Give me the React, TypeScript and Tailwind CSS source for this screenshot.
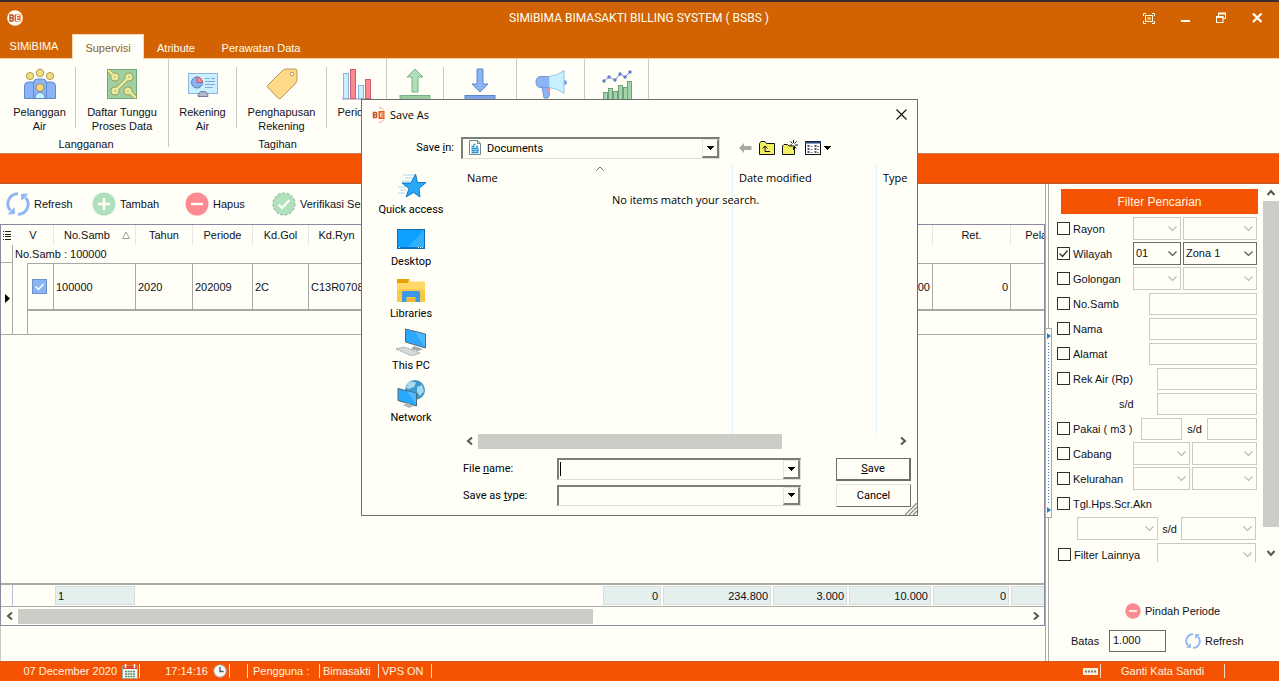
import { useState, type ReactNode } from "react";

/* ---------- Ribbon icons ---------- */

const PeopleIcon = () => (
  <svg width="34" height="32" viewBox="0 0 34 32" aria-hidden="true">
    <g stroke="#b0a050" fill="#f0de80">
      <circle cx="7" cy="8" r="3.6" />
      <circle cx="17" cy="5" r="3.8" />
      <circle cx="27" cy="8" r="3.6" />
    </g>
    <g fill="#8ab4f5" stroke="#5f8ad0">
      <path d="M1.500 30.500V18q0-4 4-4H9q3 0 3 3v13.500z" />
      <path d="M32.500 30.500V18q0-4-4-4H25q-3 0-3 3v13.500z" />
      <path d="M10.500 30.500V15q0-4 4-4h5q4 0 4 4v15.500z" />
    </g>
    <path d="M12 30.500q0-6 5-6t5 6z" fill="#c8f0ff" stroke="#5f8ad0" />
    <circle cx="17" cy="19.500" r="3.800" fill="#ffd880" stroke="#a89050" />
  </svg>
);

const CircuitIcon = () => (
  <svg width="32" height="32" viewBox="0 0 32 32" aria-hidden="true">
    <rect x="1.500" y="1.500" width="29" height="29" fill="#a0cfa4" stroke="#6ea878" />
    <g stroke="#8f9c58" strokeWidth="4" strokeLinecap="round">
      <path d="M3 3l5 5M10 22L22 10M24 24l5 5" />
    </g>
    <g fill="none" stroke="#8f9c58" strokeWidth="4.500">
      <circle cx="9" cy="9" r="2.300" />
      <circle cx="23" cy="9" r="2.300" />
      <circle cx="9" cy="23" r="2.300" />
      <circle cx="22" cy="23" r="2.300" />
    </g>
    <g stroke="#ecea9a" strokeWidth="2.500" strokeLinecap="round">
      <path d="M3 3l5 5M10 22L22 10M24 24l5 5" />
    </g>
    <g fill="#a0cfa4" stroke="#ecea9a" strokeWidth="2.600">
      <circle cx="9" cy="9" r="2.300" />
      <circle cx="23" cy="9" r="2.300" />
      <circle cx="9" cy="23" r="2.300" />
      <circle cx="22" cy="23" r="2.300" />
    </g>
  </svg>
);

const AccountIcon = () => (
  <svg width="32" height="32" viewBox="0 0 32 32" aria-hidden="true">
    <rect x="1.500" y="5.500" width="29" height="20" fill="#c8f0ff" stroke="#8fb4e0" />
    <circle cx="10" cy="14.500" r="5.500" fill="#8ab4f5" stroke="#5f7fb8" />
    <path d="M10 9v5.500h5.500A5.500 5.500 0 0 0 10 9z" fill="#f58a90" stroke="#b86070" />
    <path d="M18 10.500h4M18 13.500h10M18 16.500h10M18 19.500h8M24 10.500h4" stroke="#7fa8d8" />
    <path d="M11 28.500q0-5 5-5t5 5z" fill="#b0b8d0" stroke="#70789a" />
  </svg>
);

const TagIcon = () => (
  <svg width="32" height="32" viewBox="0 0 32 32" aria-hidden="true">
    <path d="M1.500 17.500L16 3q2-2 5-2h8q2 0 2 2v8q0 3-2 5L15 30q-1.500 1.500-3 0L1.500 19q-.8-.8 0-1.500z" fill="#ffd98a" stroke="#b89858" />
    <circle cx="26" cy="6" r="1.800" fill="#fffff8" stroke="#b89858" />
  </svg>
);

const BarsIcon = () => (
  <svg width="32" height="32" viewBox="0 0 32 32" aria-hidden="true">
    <path d="M1 31h30" stroke="#a08cb0" />
    <rect x="2.500" y="5.500" width="5" height="25" fill="#c8f0ff" stroke="#90b0d8" />
    <rect x="9.500" y="1.500" width="5" height="29" fill="#fa8a90" stroke="#c86070" />
    <rect x="17.500" y="17.500" width="5" height="13" fill="#c8f0ff" stroke="#90b0d8" />
    <rect x="24.500" y="11.500" width="5" height="19" fill="#fa8a90" stroke="#c86070" />
  </svg>
);

const UploadIcon = () => (
  <svg width="32" height="32" viewBox="0 0 32 32" aria-hidden="true">
    <path d="M16 1l8 8h-5v15h-6V9H8z" fill="#b0e0b8" stroke="#78b088" />
    <rect x="1" y="27.500" width="30" height="4" fill="#98cca0" stroke="#78b088" />
  </svg>
);

const DownloadIcon = () => (
  <svg width="32" height="32" viewBox="0 0 32 32" aria-hidden="true">
    <path d="M16 24l8-8h-5V1h-6v15H8z" fill="#8ab4f5" stroke="#5f84c8" />
    <rect x="1" y="27.500" width="30" height="4" fill="#7ca4e8" stroke="#5f84c8" />
  </svg>
);

const MegaphoneIcon = () => (
  <svg width="32" height="32" viewBox="0 0 32 32" aria-hidden="true">
    <path d="M29 12q3 0 3 2.500T29 17z" fill="#7fa0e8" />
    <path d="M7 19l2 11h4l1.500-3-1-8z" fill="#8ab4f5" stroke="#7098d8" />
    <path d="M12 20h3v4h-2.500z" fill="#f58a90" />
    <path d="M6 8.500h8v11H6q-5 0-5-5.500t5-5.500z" fill="#8ab4f5" stroke="#7098d8" />
    <path d="M14 8.500q9-1 15-6v23q-6-5-15-6z" fill="#c8f0ff" stroke="#98c4e8" />
  </svg>
);

const StatsIcon = () => (
  <svg width="32" height="32" viewBox="0 0 32 32" aria-hidden="true">
    <path d="M3 13l5-4 6 3 5-6 5 3 5-5" fill="none" stroke="#7890c8" />
    <g fill="#5a7cc8">
      <circle cx="3" cy="13" r="1.700" />
      <circle cx="8" cy="9" r="1.700" />
      <circle cx="14" cy="12" r="1.700" />
      <circle cx="19" cy="6" r="1.700" />
      <circle cx="24" cy="9" r="1.700" />
      <circle cx="29" cy="4" r="1.700" />
    </g>
    <g fill="#a4d4ac" stroke="#70a07c">
      <rect x="2.500" y="24.500" width="4" height="8" />
      <rect x="7.500" y="20.500" width="4" height="12" />
      <rect x="12.500" y="23.500" width="4" height="9" />
      <rect x="17.500" y="17.500" width="4" height="15" />
      <rect x="22.500" y="19.500" width="4" height="13" />
      <rect x="26.500" y="13.500" width="4" height="19" />
    </g>
  </svg>
);

/* ---------- Toolbar icons ---------- */

const RefreshIcon = ({ size = 24 }: { size?: number }) => (
  <svg width={size} height={size} viewBox="0 0 24 24" aria-hidden="true">
    <g fill="none" stroke="#90b8f4" strokeWidth="3">
      <path d="M12 1.800A10 10 0 0 0 4.500 18.500" />
      <path d="M12 22.200A10 10 0 0 0 19.500 5.500" />
    </g>
    <path d="M1.500 22.500l7.500-.5-.5-7z" fill="#90b8f4" />
    <path d="M22.500 1.500l-7.500 .5 .5 7z" fill="#90b8f4" />
  </svg>
);

const AddIcon = () => (
  <svg width="24" height="24" viewBox="0 0 24 24" aria-hidden="true">
    <circle cx="12" cy="12" r="11.500" fill="#b0e0bc" />
    <path d="M12 6v12M6 12h12" stroke="#fffff8" strokeWidth="2.400" />
  </svg>
);

const RemoveIcon = ({ size = 24 }: { size?: number }) => (
  <svg width={size} height={size} viewBox="0 0 24 24" aria-hidden="true">
    <circle cx="12" cy="12" r="11.500" fill="#fb8a92" />
    <path d="M6 12h12" stroke="#fffff8" strokeWidth="2.400" />
  </svg>
);

const VerifyIcon = () => (
  <svg width="24" height="24" viewBox="0 0 24 24" aria-hidden="true">
    <circle cx="12" cy="12" r="10.800" fill="#b0e0bc" />
    <circle cx="12" cy="12" r="11" fill="none" stroke="#7fb090" strokeDasharray="3 1.500" />
    <path d="M6.500 12.500l3.500 3.500 7.500-8" fill="none" stroke="#fffff8" strokeWidth="2.200" />
  </svg>
);

const LogoIcon = () => (
  <svg width="16" height="16" viewBox="0 0 16 16" aria-hidden="true">
    <circle cx="8" cy="8" r="7.800" fill="#fffff8" />
    <path d="M7.500 4.500h6v7h-6z" fill="#ee5a10" />
    <path d="M3 5h2.500q1.500 1.500 0 3 1.500 1.500 0 3H3zM3 8h2.500" fill="none" stroke="#a84820" strokeWidth="1.300" />
    <path d="M12.500 5.500h-3v5h3M9.500 8h3" fill="none" stroke="#fffff8" />
  </svg>
);

const DialogLogoIcon = () => (
  <svg width="14" height="16" viewBox="0 0 14 16" aria-hidden="true">
    <path d="M7 .5q3 0 5 3M7 15.500q3 0 5-3" fill="none" stroke="#f0a080" />
    <path d="M6.500 4h6v8h-6z" fill="#ee5a10" />
    <path d="M1.500 5.500H4q1.500 1.200 0 2.500 1.500 1.200 0 2.500H1.500zM1.500 8H4" fill="none" stroke="#c05020" strokeWidth="1.500" />
    <path d="M11.500 6h-3v4h3M8.500 8h3" fill="none" stroke="#ffd8c0" />
  </svg>
);

/* ---------- Small glyphs ---------- */

type Direction = "left" | "right" | "up" | "down";

const chevronPaths: Record<Direction, string> = {
  left: "M7 1.500L3 5l4 3.500",
  right: "M3 1.500L7 5 3 8.500",
  up: "M1.500 7L5 3l3.500 4",
  down: "M1.500 3L5 7l3.500-4",
};

const Chevron = ({ dir }: { dir: Direction }) => (
  <svg width="10" height="10" viewBox="0 0 10 10" aria-hidden="true">
    <path d={chevronPaths[dir]} fill="none" stroke="#555852" strokeWidth="2" />
  </svg>
);

const CaretDown = () => (
  <svg width="8" height="5" viewBox="0 0 8 5" aria-hidden="true" shapeRendering="crispEdges">
    <path d="M0 0h8L4 4z" fill="#000" />
  </svg>
);

/* ---------- Window frame ---------- */

const TitleBar = () => (
  <header className="shrink-0 border-t-2 border-[#3a2c30] bg-[#d26202] text-[#fffff0]">
    <div className="flex h-8 items-center pr-4 pl-[7px]">
      <div className="flex flex-1">
        <LogoIcon />
      </div>
      <h1 className="pl-2 font-['Roboto',sans-serif] text-[12px]">SIMiBIMA BIMASAKTI BILLING SYSTEM ( BSBS )</h1>
      <div className="flex flex-1 items-center justify-end gap-6">
        <button type="button" aria-label="Full screen">
          <svg width="12" height="11" viewBox="0 0 12 11" aria-hidden="true">
            <path d="M.5 3V.5H3M9 .5h2.500V3M11.500 8v2.500H9M3 10.500H.5V8" fill="none" stroke="#fffff0" />
            <rect x="2.500" y="2.500" width="7" height="6" fill="#d26202" stroke="#fffff0" />
            <rect x="4" y="4" width="4" height="3" fill="#f0b060" />
          </svg>
        </button>
        <button type="button" aria-label="Minimize">
          <svg width="12" height="12" viewBox="0 0 12 12" aria-hidden="true">
            <path d="M2 9h9" stroke="#fffff0" strokeWidth="2" />
          </svg>
        </button>
        <button type="button" aria-label="Restore">
          <svg width="12" height="12" viewBox="0 0 12 12" aria-hidden="true">
            <path d="M3.500 4V1.500h7v5H8" fill="none" stroke="#fffff0" />
            <path d="M3 1.500h8M1 5h7.500" stroke="#fffff0" strokeWidth="2" />
            <rect x="1.500" y="5" width="6.500" height="5.500" fill="none" stroke="#fffff0" />
          </svg>
        </button>
        <button type="button" aria-label="Close">
          <svg width="12" height="12" viewBox="0 0 12 12" aria-hidden="true">
            <path d="M2 1.500l8.500 8.500M10.500 1.500L2 10" stroke="#fffff0" strokeWidth="2.300" />
          </svg>
        </button>
      </div>
    </div>
    <nav className="flex h-[25px] items-stretch border-b border-[#f8c8a0]">
      <button type="button" className="w-[68px]">SIMiBIMA</button>
      <button type="button" className="-mb-px ml-1 w-[72px] border border-b-0 border-[#f8d8b8] bg-[#fffff8] pt-0.5 text-[#90601c]">
        Supervisi
      </button>
      <button type="button" className="w-16 pt-1">Atribute</button>
      <button type="button" className="w-[106px] pt-1">Perawatan Data</button>
    </nav>
  </header>
);

type RibbonItem = { icon: ReactNode; name: string; lines: string[]; width: string };
type RibbonGroup = { title: string; items: RibbonItem[] };

const ribbon: RibbonGroup[] = [
  {
    title: "Langganan",
    items: [
      { icon: <PeopleIcon />, name: "Pelanggan Air", lines: ["Pelanggan", "Air"], width: "w-[71px]" },
      { icon: <CircuitIcon />, name: "Daftar Tunggu Proses Data", lines: ["Daftar Tunggu", "Proses Data"], width: "w-[92px]" },
    ],
  },
  {
    title: "Tagihan",
    items: [
      { icon: <AccountIcon />, name: "Rekening Air", lines: ["Rekening", "Air"], width: "w-[67px]" },
      { icon: <TagIcon />, name: "Penghapusan Rekening", lines: ["Penghapusan", "Rekening"], width: "w-[89px]" },
      { icon: <BarsIcon />, name: "Periode", lines: ["Periode"], width: "w-[59px]" },
    ],
  },
  {
    title: "",
    items: [
      { icon: <UploadIcon />, name: "Upload", lines: [], width: "w-14" },
      { icon: <DownloadIcon />, name: "Download", lines: [], width: "w-[72px]" },
    ],
  },
  { title: "", items: [{ icon: <MegaphoneIcon />, name: "Pengumuman", lines: [], width: "w-[67px]" }] },
  { title: "", items: [{ icon: <StatsIcon />, name: "Statistik", lines: [], width: "w-[63px]" }] },
];

const Ribbon = () => (
  <section className="flex h-[94px] shrink-0 overflow-hidden pl-1">
    {ribbon.map((group, g) => (
      <div key={g} className="flex">
        <div className="flex flex-col">
          <div className="flex h-[78px]">
            {group.items.map((item, i) => (
              <div key={item.name} className="flex">
                {i > 0 && <div className="mt-2 h-[61px] w-px bg-[#c8cbc4]" />}
                <button
                  type="button"
                  aria-label={item.name}
                  className={`flex flex-col items-center gap-[5px] pt-[9px] leading-[14px] whitespace-nowrap ${item.width}`}
                >
                  {item.icon}
                  <span className="flex flex-col">
                    {item.lines.map((line) => (
                      <span key={line}>{line}</span>
                    ))}
                  </span>
                </button>
              </div>
            ))}
          </div>
          <p className="text-center leading-[14px]">{group.title}</p>
        </div>
        <div className="h-[88px] w-px bg-[#c8cbc4]" />
      </div>
    ))}
  </section>
);

/* ---------- Grid ---------- */

const Columns = () => (
  <colgroup>
    <col className="w-[13px]" />
    <col className="w-[14px]" />
    <col className="w-[26px]" />
    <col className="w-[82px]" />
    <col className="w-[57px]" />
    <col className="w-[60px]" />
    <col className="w-[56px]" />
    <col className="w-[56px]" />
    <col className="w-[238px]" />
    <col className="w-[60px]" />
    <col className="w-[110px]" />
    <col className="w-[76px]" />
    <col className="w-[84px]" />
    <col className="w-[78px]" />
    <col className="w-[82px]" />
  </colgroup>
);

const headings = ["No.Samb", "Tahun", "Periode", "Kd.Gol", "Kd.Ryn", "", "", "", "", "", "Ret.", "Pelanggan"];
const record = ["100000", "2020", "202009", "2C", "C13R0708", "", "0", "234.800", "3.000", "10.000", "0", ""];
const totals = ["1", "", "", "", "", "", "0", "234.800", "3.000", "10.000", "0", ""];

const HorizontalBar = ({ thumb }: { thumb: string }) => (
  <div className="flex h-4 items-center">
    <button type="button" aria-label="Scroll left" className="flex w-[17px] justify-center">
      <Chevron dir="left" />
    </button>
    <div className="h-[15px] flex-1">
      <div className={`h-full bg-[#cbcec6] ${thumb}`} />
    </div>
    <button type="button" aria-label="Scroll right" className="flex w-[17px] justify-center">
      <Chevron dir="right" />
    </button>
  </div>
);

const GridPane = () => {
  const [picked, setPicked] = useState(true);
  return (
    <section className="flex min-w-0 flex-1 flex-col">
      <div className="flex h-10 shrink-0 items-center pl-1.5">
        <button type="button" className="flex w-[86px] items-center gap-1"><RefreshIcon />Refresh</button>
        <button type="button" className="flex w-[93px] items-center gap-1"><AddIcon />Tambah</button>
        <button type="button" className="flex w-[87px] items-center gap-1"><RemoveIcon />Hapus</button>
        <button type="button" className="flex items-center gap-1"><VerifyIcon />Verifikasi Semua</button>
      </div>
      <div className="flex min-h-0 flex-1 flex-col overflow-hidden border border-[#8c88a4] bg-[#fffff8]">
        <div className="flex-1 overflow-hidden">
          <table className="-ml-px w-[1092px] table-fixed border-separate border-spacing-0">
            <Columns />
            <thead>
              <tr className="h-5">
                <th>
                  <svg width="8" height="9" viewBox="0 0 8 9" className="mx-auto" aria-hidden="true" shapeRendering="crispEdges">
                    <path d="M0 .5h1M2 .5h6M0 3.500h1M2 3.500h6M0 5.500h1M2 5.500h6M0 8.500h1M2 8.500h6" stroke="#222" />
                  </svg>
                </th>
                <th colSpan={2} className="font-normal">V</th>
                {headings.map((heading, i) => (
                  <th key={i} className="overflow-hidden border-l border-[#e6e8e6] font-normal whitespace-nowrap">
                    {i === 0 ? (
                      <span className="flex items-center pl-2.5">
                        {heading}
                        <svg width="8" height="8" viewBox="0 0 8 8" className="ml-3" aria-hidden="true">
                          <path d="M4 1L7.500 7.500h-7z" fill="none" stroke="#a0a39c" />
                        </svg>
                      </span>
                    ) : (
                      heading
                    )}
                  </th>
                ))}
              </tr>
            </thead>
            <tbody>
              <tr className="h-[18px]">
                <td className="border-r border-b border-[#a6a9a4]" />
                <td colSpan={14} className="pl-0.5">No.Samb : 100000</td>
              </tr>
              <tr className="h-12">
                <td rowSpan={2} className="border-r border-b border-[#a6a9a4]">
                  <svg width="6" height="9" viewBox="0 0 6 9" className="ml-[5px]" aria-hidden="true">
                    <path d="M0 0l5 4.500L0 9z" fill="#000" />
                  </svg>
                </td>
                <td rowSpan={2} className="border-b border-[#a6a9a4]" />
                <td className="border-t border-b-2 border-l border-[#a6a9a4]">
                  <label className="relative ml-1 flex size-[15px]">
                    <input
                      type="checkbox"
                      aria-label="Pilih 100000"
                      checked={picked}
                      onChange={() => setPicked(!picked)}
                      className="peer size-[15px] appearance-none border border-[#7090c8] checked:bg-[#8ab4f5]"
                    />
                    <svg width="15" height="15" viewBox="0 0 15 15" className="pointer-events-none absolute hidden peer-checked:block" aria-hidden="true">
                      <path d="M3.500 7.500l3 3 5-5.500" fill="none" stroke="#fffff8" strokeWidth="1.500" />
                    </svg>
                  </label>
                </td>
                {record.map((value, i) => (
                  <td
                    key={i}
                    className={`overflow-hidden border-t border-b-2 border-l border-[#a6a9a4] px-0.5 whitespace-nowrap ${i > 5 ? "text-right" : ""}`}
                  >
                    {value}
                  </td>
                ))}
              </tr>
              <tr className="h-6">
                <td colSpan={13} className="border-b border-l border-[#a6a9a4]" />
              </tr>
            </tbody>
          </table>
        </div>
        <div className="overflow-hidden border-t-2 border-b border-[#a9aca4]">
          <table className="-ml-px w-[1092px] table-fixed border-separate border-spacing-0">
            <Columns />
            <tbody>
              <tr className="h-[21px]">
                <td className="border-r border-[#c0b8d4]" />
                <td colSpan={2} />
                {totals.map((value, i) => (
                  <td key={i} className={`py-px ${i > 5 ? "pr-px pl-px text-right" : "pl-0.5"}`}>
                    {(value || i === 11) && (
                      <div className="h-[19px] border border-[#d8dcdc] bg-[#e4f0ee] px-0.5 leading-[18px]">{value}</div>
                    )}
                  </td>
                ))}
              </tr>
            </tbody>
          </table>
        </div>
        <div className="py-px">
          <HorizontalBar thumb="w-[57%]" />
        </div>
      </div>
      <div className="h-[35px] shrink-0 border-l border-[#c8cbc4]" />
    </section>
  );
};

const Splitter = () => (
  <div className="relative w-1 shrink-0 border-r border-l border-[#a9aca4]">
    <button
      type="button"
      aria-label="Collapse filter panel"
      className="absolute top-36 left-0 flex h-[190px] w-1.5 flex-col items-center justify-between border border-l-0 border-[#a9aca4] bg-[#fffff8] py-1"
    >
      <svg width="4" height="6" viewBox="0 0 4 6" aria-hidden="true"><path d="M0 0l4 3-4 3z" fill="#2080c8" /></svg>
      <svg width="1" className="my-1 flex-1" aria-hidden="true">
        <path d="M.5 0v170" stroke="#2080c8" strokeDasharray="1 2" />
      </svg>
      <svg width="4" height="6" viewBox="0 0 4 6" aria-hidden="true"><path d="M0 0l4 3-4 3z" fill="#2080c8" /></svg>
    </button>
  </div>
);

/* ---------- Filter panel ---------- */

const Tick = ({ label, defaultChecked = false }: { label: string; defaultChecked?: boolean }) => (
  <label className="relative flex flex-1 items-center gap-[3px] whitespace-nowrap">
    <input type="checkbox" defaultChecked={defaultChecked} className="peer size-[13px] appearance-none border border-[#30332e]" />
    <svg width="13" height="13" viewBox="0 0 13 13" className="pointer-events-none absolute left-0 hidden peer-checked:block" aria-hidden="true">
      <path d="M2.500 6.500l3 3 5-6" fill="none" stroke="#30332e" strokeWidth="1.300" />
    </svg>
    {label}
  </label>
);

const Drop = ({ label, width, value }: { label: string; width: string; value?: string }) => (
  <div className={`relative h-[23px] ${width}`}>
    <select
      aria-label={label}
      disabled={!value}
      className="size-full appearance-none border border-[#6b6e68] bg-[#fffff8] px-0.5 pb-0.5 opacity-100 disabled:border-[#c9ccc4]"
    >
      <option>{value ?? ""}</option>
    </select>
    <svg width="9" height="6" viewBox="0 0 9 6" className="pointer-events-none absolute top-[9px] right-1" aria-hidden="true">
      <path d="M.5 .5l4 4 4-4" fill="none" stroke={value ? "#555852" : "#b8bbb4"} strokeWidth="1.200" />
    </svg>
  </div>
);

const Field = ({ label, width }: { label: string; width: string }) => (
  <input type="text" aria-label={label} disabled className={`h-[22px] border border-[#c9ccc4] bg-[#fffff8] px-1 ${width}`} />
);

const Row = ({ children }: { children: ReactNode }) => (
  <div className="flex h-[25px] items-center gap-0.5 pr-1.5">{children}</div>
);

const FilterPanel = () => (
  <aside className="flex w-[230px] shrink-0 flex-col">
    <div className="flex h-[378px] shrink-0 overflow-hidden">
      <div className="flex-1 overflow-hidden pt-[5px] pl-2">
        <h2 className="mr-[5px] mb-0.5 ml-1 flex h-[25px] items-center justify-center bg-[#f55202] text-[12px] text-[#fff4e0]">
          Filter Pencarian
        </h2>
        <Row>
          <Tick label="Rayon" />
          <Drop label="Kode rayon" width="w-12" />
          <Drop label="Nama rayon" width="w-[74px]" />
        </Row>
        <Row>
          <Tick label="Wilayah" defaultChecked />
          <Drop label="Kode wilayah" width="w-12" value="01" />
          <Drop label="Nama wilayah" width="w-[74px]" value="Zona 1" />
        </Row>
        <Row>
          <Tick label="Golongan" />
          <Drop label="Kode golongan" width="w-12" />
          <Drop label="Nama golongan" width="w-[74px]" />
        </Row>
        <Row><Tick label="No.Samb" /><Field label="No.Samb" width="w-[108px]" /></Row>
        <Row><Tick label="Nama" /><Field label="Nama" width="w-[108px]" /></Row>
        <Row><Tick label="Alamat" /><Field label="Alamat" width="w-[108px]" /></Row>
        <Row><Tick label="Rek Air (Rp)" /><Field label="Rekening air dari" width="w-[100px]" /></Row>
        <Row>
          <span className="flex-1 pl-[62px]">s/d</span>
          <Field label="Rekening air sampai" width="w-[100px]" />
        </Row>
        <Row>
          <Tick label="Pakai ( m3 )" />
          <Field label="Pakai dari" width="w-[41px]" />
          <span className="w-[21px] text-center">s/d</span>
          <Field label="Pakai sampai" width="w-[50px]" />
        </Row>
        <Row>
          <Tick label="Cabang" />
          <Drop label="Kode cabang" width="w-[57px]" />
          <Drop label="Nama cabang" width="w-[65px]" />
        </Row>
        <Row>
          <Tick label="Kelurahan" />
          <Drop label="Kode kelurahan" width="w-[57px]" />
          <Drop label="Nama kelurahan" width="w-[65px]" />
        </Row>
        <Row><Tick label="Tgl.Hps.Scr.Akn" /></Row>
        <div className="flex h-[25px] items-center gap-0.5 pr-[7px] pl-5">
          <Drop label="Tanggal dari" width="w-[81px]" />
          <span className="flex-1 text-center">s/d</span>
          <Drop label="Tanggal sampai" width="w-[75px]" />
        </div>
        <div className="flex h-[27px] items-center gap-0.5 pr-[7px] pl-px">
          <Tick label="Filter Lainnya" />
          <Drop label="Filter lainnya" width="w-[99px]" />
        </div>
      </div>
      <div className="flex w-4 flex-col items-center py-1">
        <button type="button" aria-label="Scroll up"><Chevron dir="up" /></button>
        <div className="mt-[3px] w-full flex-1"><div className="h-[94%] bg-[#cbcec6]" /></div>
        <button type="button" aria-label="Scroll down"><Chevron dir="down" /></button>
      </div>
    </div>
    <div className="flex flex-1 flex-col gap-[11px] pt-[41px]">
      <button type="button" className="flex items-center gap-1 pl-[76px]">
        <RemoveIcon size={16} />Pindah Periode
      </button>
      <div className="flex items-center pl-[22px]">
        <label htmlFor="batas" className="w-[38px]">Batas</label>
        <input id="batas" defaultValue="1.000" className="h-[22px] w-[57px] border border-[#6b6e68] bg-[#fffff8] px-[3px] pb-0.5" />
        <button type="button" className="ml-[19px] flex items-center gap-1"><RefreshIcon size={16} />Refresh</button>
      </div>
    </div>
  </aside>
);

/* ---------- Status bar ---------- */

const Cell = ({ width, children }: { width: string; children?: ReactNode }) => (
  <div className={`flex h-3.5 items-center gap-[5px] border-r border-[#ffd8c0] whitespace-nowrap ${width}`}>{children}</div>
);

const StatusBar = () => (
  <footer className="flex h-5 shrink-0 items-center border-t border-[#c85c28] bg-[#f55202] pb-px text-[#fff4e0]">
    <Cell width="w-[140px] justify-end pr-px">
      07 December 2020
      <svg width="16" height="15" viewBox="0 0 16 15" aria-hidden="true">
        <rect x=".5" y="2" width="15" height="12.500" fill="#f4f4e8" stroke="#a8a898" />
        <path d="M1 2h14v3H1z" fill="#d84838" />
        <path d="M3.500 0v4M12.500 0v4" stroke="#fff" strokeWidth="1.500" />
        <path d="M3 7.500h10M3 10h10M3 12.500h10" stroke="#589070" strokeWidth="1.500" strokeDasharray="2 .7" />
      </svg>
    </Cell>
    <Cell width="w-[90px] justify-end pr-0.5">
      17:14:16
      <svg width="14" height="14" viewBox="0 0 14 14" aria-hidden="true">
        <circle cx="7" cy="7" r="6.200" fill="#f4f8f8" stroke="#b0a8a0" />
        <path d="M7 3v4.500h3.500" fill="none" stroke="#405868" strokeWidth="1.300" />
      </svg>
    </Cell>
    <Cell width="w-[18px]" />
    <Cell width="w-[72px] pl-[5px]">Pengguna :</Cell>
    <Cell width="w-[59px] pl-[3px]">Bimasakti</Cell>
    <Cell width="w-[53px] pl-[3px]">VPS ON</Cell>
    <div className="flex-1" />
    <Cell width="pr-0.5">
      <svg width="15" height="7" viewBox="0 0 15 7" aria-hidden="true">
        <rect width="15" height="7" fill="#f4f0e0" />
        <path d="M2 3.500h11" stroke="#807868" strokeWidth="2" strokeDasharray="2 1" />
      </svg>
    </Cell>
    <Cell width="w-[124px] pl-5"><button type="button">Ganti Kata Sandi</button></Cell>
    <div className="w-[54px]" />
  </footer>
);

/* ---------- Save dialog ---------- */

const QuickIcon = () => (
  <svg width="32" height="28" viewBox="0 0 32 28" aria-hidden="true">
    <path d="M8 3h11M10 6h8M7 9h9M3 15h8M5 18h6M3 21h7" stroke="#a8d8f0" />
    <path d="M20.500 2l2 8.500H31l-7 6 1 8.500-6.500-4.500L11 25l3-8.500L7 11h9z" fill="#28a8f8" stroke="#1878c0" />
  </svg>
);

const DesktopIcon = () => (
  <svg width="32" height="28" viewBox="0 0 32 28" aria-hidden="true">
    <rect x="2.500" y="5.500" width="27" height="19" fill="#10a0ff" stroke="#106cb0" />
    <path d="M29 6v18H12z" fill="#30b0ff" />
    <path d="M3 23.500h26" stroke="#0878c8" />
    <path d="M4 23.500h2M23 23.500h5" stroke="#e8f8ff" strokeDasharray="1 1" />
  </svg>
);

const LibrariesIcon = () => (
  <svg width="32" height="28" viewBox="0 0 32 28" aria-hidden="true">
    <path d="M2 3h12l1.500 2.500H30V26H2z" fill="#ffd868" />
    <path d="M2 3h12.500l-2 4H2z" fill="#e8a008" />
    <path d="M2 15l5-2h18l5 2v11H2z" fill="#f8c848" />
    <path d="M7 16.500q0-1.500 1.500-1.500h15q1.500 0 1.500 1.500V26h-4.500v-5h-9v5H7z" fill="#3c98e8" />
    <path d="M12 22h8v4h-8z" fill="#f4b838" />
  </svg>
);

const ComputerIcon = () => (
  <svg width="32" height="28" viewBox="0 0 32 28" aria-hidden="true">
    <path d="M10.500 1l20 5v14l-20-6z" fill="#2ea8ff" stroke="#506878" />
    <path d="M20 4l10 2.500V19z" fill="#50b8ff" />
    <path d="M19 18l6 2 3 1.500-5 1.500-7-2z" fill="#a0a8a8" />
    <path d="M1 21l8-2 16 6-8 3z" fill="#d4dada" stroke="#98a0a0" strokeDasharray="2 1" />
  </svg>
);

const NetworkIcon = () => (
  <svg width="32" height="28" viewBox="0 0 32 28" aria-hidden="true">
    <circle cx="20" cy="10" r="10" fill="#4098c8" />
    <path d="M13 3q5-3 8 0l-2 4-5 2-3-1zM22 7l5-2 2 6-4 5-3-4z" fill="#a8d8f0" />
    <path d="M3 8.500l18.500 5v12.500L3 20.500z" fill="#28a8ff" stroke="#486878" />
    <path d="M12 11l9 2.500v11z" fill="#50b8ff" />
    <path d="M8 25l5-2 6 3-5 2z" fill="#b0b8b8" />
  </svg>
);

const places = [
  { name: "Quick access", icon: <QuickIcon /> },
  { name: "Desktop", icon: <DesktopIcon /> },
  { name: "Libraries", icon: <LibrariesIcon /> },
  { name: "This PC", icon: <ComputerIcon /> },
  { name: "Network", icon: <NetworkIcon /> },
];

const DropButton = () => (
  <span className="pointer-events-none absolute top-0.5 right-px bottom-px flex w-[17px] items-center justify-center border-t border-r-2 border-b-2 border-l border-[#7c7f78] border-t-[#e4e6e0] border-l-[#e4e6e0] bg-[#fffff8]">
    <CaretDown />
  </span>
);

const sunken = "border-t-2 border-l-2 border-r border-b border-[#7c7f78] border-r-[#dcdfd8] border-b-[#dcdfd8] bg-[#fffff8]";

const SaveDialog = () => (
  <div
    role="dialog"
    aria-label="Save As"
    className="absolute top-[99px] left-[361px] flex h-[417px] w-[557px] flex-col border border-[#6c6f6a] bg-[#fffff8] font-['Roboto',sans-serif] text-[11px] text-black"
  >
    <div className="flex h-[29px] items-center pr-2.5 pl-2.5">
      <DialogLogoIcon />
      <span className="ml-1 flex-1 font-['Open_Sans',sans-serif] text-[11px]">Save As</span>
      <button type="button" aria-label="Close">
        <svg width="11" height="11" viewBox="0 0 11 11" aria-hidden="true">
          <path d="M.5 .5l10 10M10.500 .5l-10 10" stroke="#111" strokeWidth="1.100" />
        </svg>
      </button>
    </div>

    <div className="mt-2 flex h-[22px] items-center">
      <label htmlFor="save-in" className="w-[92px] text-right">
        Save <u>i</u>n:
      </label>
      <div className="relative ml-[7px] h-[22px] w-[259px]">
        <select id="save-in" className={`size-full appearance-none pl-6 ${sunken}`}>
          <option>Documents</option>
        </select>
        <svg width="12" height="15" viewBox="0 0 12 15" className="pointer-events-none absolute top-[3px] left-2" aria-hidden="true">
          <path d="M.5 .5h8l3 3v11H.5z" fill="#fffff8" stroke="#708890" />
          <path d="M8.500 .5v3h3" fill="none" stroke="#708890" />
          <path d="M2.500 6.500h3M2.500 8.500h7M2.500 10.500h4M7 10.500h3M2.500 12.500h7M4.500 4.500h2M7 6.500h2" stroke="#2090d0" strokeWidth="1.300" />
        </svg>
        <DropButton />
      </div>
      <div className="ml-[19px] flex items-center gap-[7px]">
        <button type="button" aria-label="Back">
          <svg width="13" height="10" viewBox="0 0 13 10" aria-hidden="true">
            <path d="M0 5l5-5v3h7.500v4H5v3z" fill="#a8aba4" />
          </svg>
        </button>
        <button type="button" aria-label="Up one level">
          <svg width="16" height="14" viewBox="0 0 16 14" aria-hidden="true">
            <path d="M.5 13.500v-11l1.500-2h4l1.500 2h8v11z" fill="#f0f060" stroke="#111" />
            <path d="M6 10.500h5M6 10.500V6M3.500 7.500L6 5l2.500 2.500" fill="none" stroke="#111" />
          </svg>
        </button>
        <button type="button" aria-label="New folder">
          <svg width="16" height="16" viewBox="0 0 16 16" aria-hidden="true">
            <path d="M.5 14.500V6L2 4.500h3.500L7 6h5.500v8.500z" fill="#f0f060" stroke="#111" />
            <path d="M11.500 0v3M11.500 7v3M8 5h2M13 5h3M8.500 1.500l2 2M14.500 1.500l-2 2M14.500 8.500l-2-2" stroke="#111" />
          </svg>
        </button>
        <button type="button" aria-label="View menu" className="flex items-center gap-0.5">
          <svg width="16" height="14" viewBox="0 0 16 14" aria-hidden="true">
            <rect x=".5" y=".5" width="15" height="13" fill="#fffff8" stroke="#111" />
            <path d="M0 1.500h16" stroke="#204878" strokeWidth="2" />
            <path d="M2.500 5h2M9.500 5h2M2.500 8h2M9.500 8h2M2.500 11h2M9.500 11h2" stroke="#101860" strokeWidth="1.500" />
            <path d="M5.500 5.500h2M5.500 8.500h2M5.500 11.500h2M12 5.500h2M12 8.500h2M12 11.500h2" stroke="#888" />
          </svg>
          <CaretDown />
        </button>
      </div>
    </div>

    <div className="mt-1 flex min-h-0 flex-1">
      <nav className="flex w-[98px] flex-col pt-[9px]">
        {places.map((place) => (
          <button key={place.name} type="button" className="flex h-[52px] flex-col items-center gap-[3px] leading-[14px]">
            {place.icon}
            {place.name}
          </button>
        ))}
      </nav>
      <div className="mr-1.5 flex min-w-0 flex-1 flex-col">
        <div className="relative flex min-h-0 flex-1 items-stretch overflow-hidden font-['Open_Sans',sans-serif]">
          <div className="flex flex-1 flex-col items-stretch pl-[7px]">
            <svg width="8" height="5" viewBox="0 0 8 5" className="mt-[3px] mb-[-8px] self-center" aria-hidden="true">
              <path d="M.5 4.500L4 1l3.500 3.500" fill="none" stroke="#666" />
            </svg>
            <span className="leading-[30px]">Name</span>
          </div>
          <div className="w-36 border-l border-[#e0f4f8] pl-1.5 leading-[30px]">Date modified</div>
          <div className="w-[35px] border-l border-[#e0f4f8] pl-1.5 leading-[30px]">Type</div>
          <p className="absolute inset-x-0 top-7 text-center leading-[18px]">No items match your search.</p>
        </div>
        <div className="-mt-px pl-px">
          <HorizontalBar thumb="w-[73%]" />
        </div>
        <div className="flex h-[66px] gap-[35px] pt-[9px] pl-px">
          <div className="flex flex-col gap-[5px]">
            <div className="flex items-center">
              <label htmlFor="file-name" className="w-24 pl-0.5">
                File <u>n</u>ame:
              </label>
              <div className="relative h-[22px] w-[244px]">
                <input id="file-name" autoFocus className={`size-full pl-px caret-transparent outline-none ${sunken}`} />
                <span className="pointer-events-none absolute top-1 left-[3px] h-3.5 w-px bg-black" />
                <DropButton />
              </div>
            </div>
            <div className="flex items-center">
              <label htmlFor="file-type" className="w-24 pl-0.5">
                Save as <u>t</u>ype:
              </label>
              <div className="relative h-[21px] w-[244px]">
                <select id="file-type" className={`size-full appearance-none ${sunken}`}>
                  <option></option>
                </select>
                <DropButton />
              </div>
            </div>
          </div>
          <div className="flex flex-1 flex-col gap-[3px]">
            <button type="button" className="h-[23px] border border-r-2 border-b-2 border-[#6c6f6a]">
              <u>S</u>ave
            </button>
            <button type="button" className="h-[23px] border border-[#6c6f6a] border-t-[#e4e6e0] border-l-[#e4e6e0]">
              Cancel
            </button>
          </div>
        </div>
      </div>
    </div>
    <svg width="12" height="12" viewBox="0 0 12 12" className="absolute right-0 bottom-0" aria-hidden="true">
      <path d="M0 12L12 0M4 12l8-8M8 12l4-4" stroke="#8c8f88" strokeWidth="1.300" />
    </svg>
  </div>
);

export default function App() {
  return (
    <div className="relative flex h-screen min-h-[660px] flex-col overflow-hidden bg-[#fffff8] font-['Liberation_Sans',Arial,sans-serif] text-[11px] leading-[14px] text-[#101018]">
      <TitleBar />
      <Ribbon />
      <div className="h-[31px] shrink-0 border-t border-b border-t-[#d08058] border-b-[#b85c30] bg-[#f55202]" />
      <main className="flex min-h-0 flex-1">
        <GridPane />
        <Splitter />
        <FilterPanel />
      </main>
      <StatusBar />
      <SaveDialog />
    </div>
  );
}
